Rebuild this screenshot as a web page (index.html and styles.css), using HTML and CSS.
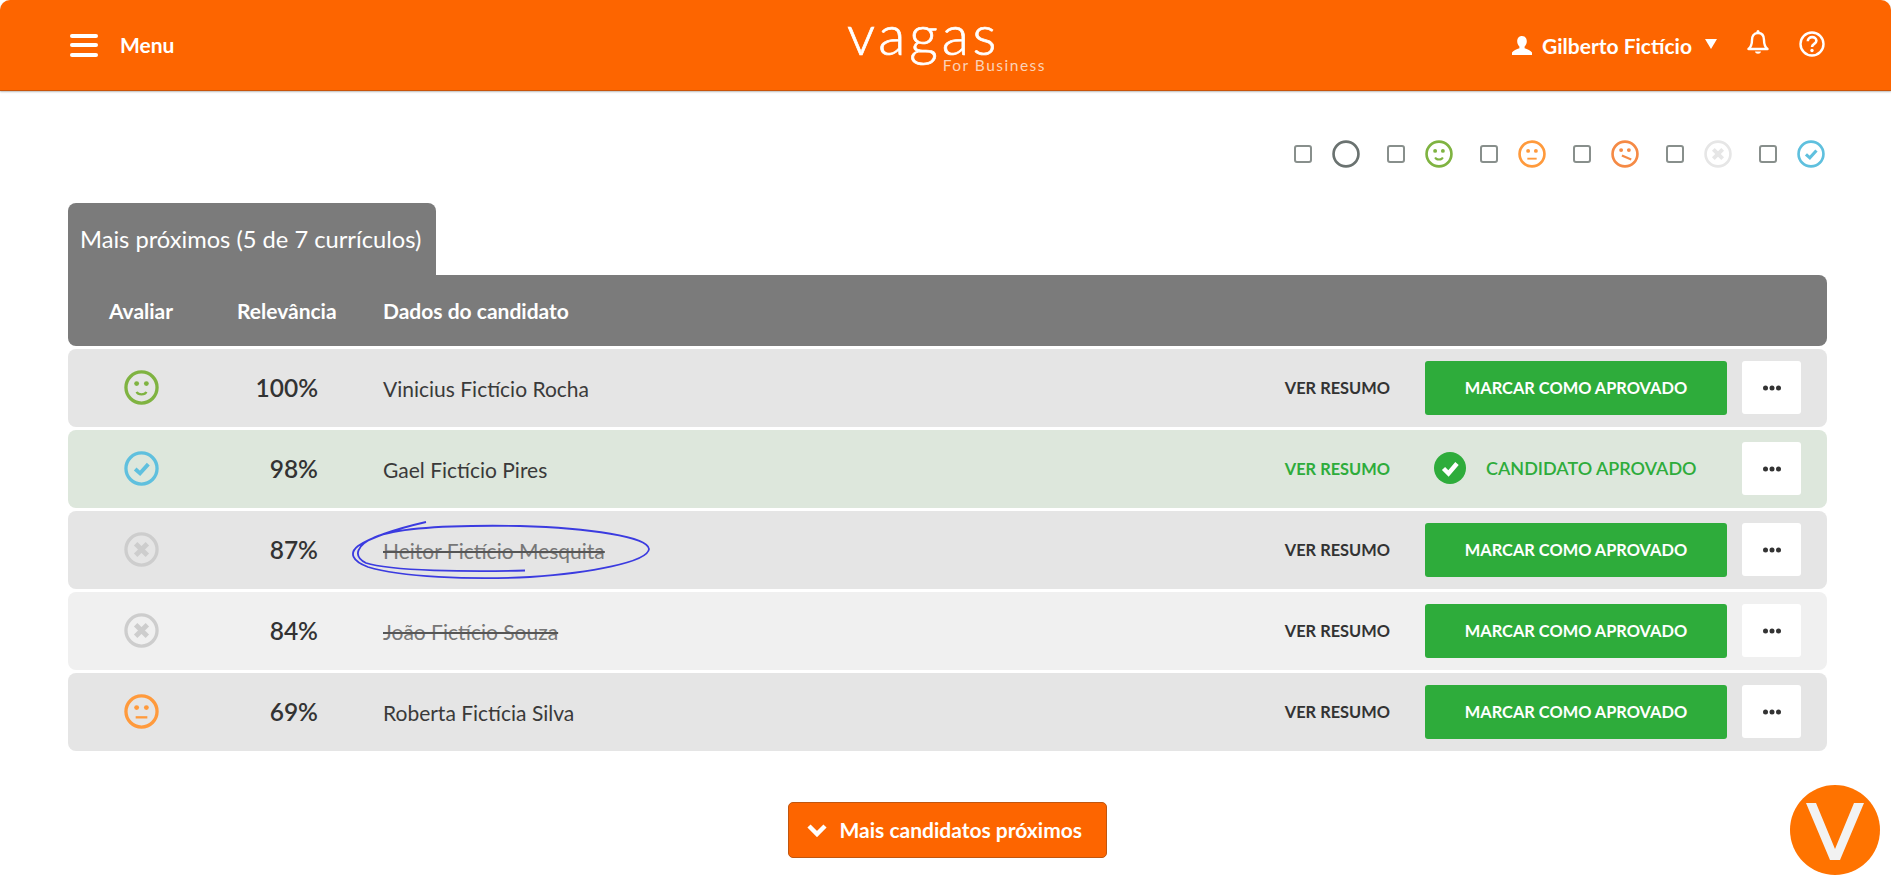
FILE: index.html
```html
<!DOCTYPE html>
<html lang="pt-BR">
<head>
    <meta charset="utf-8">
    <title>Mais próximos</title>
    <link rel="stylesheet" href="styles.css">
</head>
<body>
    <svg class="defs" width="0" height="0">
        <symbol id="ring" viewBox="0 0 36 36"><circle cx="18" cy="18" r="16" fill="none" stroke="currentColor" stroke-width="3.400"/></symbol>
        <symbol id="happy" viewBox="0 0 36 36">
            <circle cx="18" cy="18" r="16" fill="none" stroke="currentColor" stroke-width="3.400"/>
            <circle cx="13" cy="14" r="2.500" fill="currentColor"/><circle cx="23" cy="14" r="2.500" fill="currentColor"/>
            <path d="M13 22.500c1.500 3.400 8.500 3.400 10 0" fill="none" stroke="currentColor" stroke-width="2.400"/>
        </symbol>
        <symbol id="neutral" viewBox="0 0 36 36">
            <circle cx="18" cy="18" r="16" fill="none" stroke="currentColor" stroke-width="3.400"/>
            <circle cx="13" cy="14" r="2.500" fill="currentColor"/><circle cx="23" cy="14" r="2.500" fill="currentColor"/>
            <path d="M12 24h12" fill="none" stroke="currentColor" stroke-width="2.400"/>
        </symbol>
        <symbol id="sad" viewBox="0 0 36 36">
            <circle cx="18" cy="18" r="16" fill="none" stroke="currentColor" stroke-width="3.400"/>
            <circle cx="13" cy="13" r="2.500" fill="currentColor"/><circle cx="23" cy="13" r="2.500" fill="currentColor"/>
            <path d="M14 20l12 5" fill="none" stroke="currentColor" stroke-width="2.800"/>
        </symbol>
        <symbol id="cross" viewBox="0 0 36 36">
            <circle cx="18" cy="18" r="16" fill="none" stroke="currentColor" stroke-width="3.400"/>
            <path d="M12 12l12 12M24 12l-12 12" fill="none" stroke="currentColor" stroke-width="5"/>
        </symbol>
        <symbol id="tick" viewBox="0 0 36 36">
            <circle cx="18" cy="18" r="16" fill="none" stroke="currentColor" stroke-width="3.400"/>
            <path d="M11.500 18.500l5 4.500 8.500-9.500" fill="none" stroke="currentColor" stroke-width="4"/>
        </symbol>
        <symbol id="dots" viewBox="0 0 18 6"><circle cx="2.500" cy="3" r="2.500"/><circle cx="9" cy="3" r="2.500"/><circle cx="15.500" cy="3" r="2.500"/></symbol>
    </svg>

    <header class="topbar">
        <a href="#" class="menuLink">
            <span class="burger"><i></i><i></i><i></i></span>
            <span class="menuText">Menu</span>
        </a>
        <div class="logo">
            <span class="logoName">vagas</span>
            <span class="logoSub">For Business</span>
        </div>
        <div class="userArea">
            <svg class="userIcon" viewBox="0 0 20 19"><path fill="#fff" d="M10 0c3 0 4.800 2.200 4.800 5.300 0 2.300-1 4.200-2.200 5.300v1.600c2.600 1 6.400 2.200 7.400 4.300V19H0v-2.500c1-2.100 4.800-3.300 7.400-4.300v-1.600C6.200 9.500 5.200 7.600 5.200 5.300 5.200 2.200 7 0 10 0z"/></svg>
            <span class="userName">Gilberto Fictício</span>
            <span class="caret"></span>
            <svg class="bell" viewBox="0 0 22 26"><path fill="none" stroke="#fff" stroke-width="2.400" stroke-linejoin="round" d="M11 3c-4.500 0-6 3.500-6 7 0 4.500-1 7-3.500 9h19C18 17 17 14.500 17 10c0-3.500-1.500-7-6-7z"/><rect x="9.500" y="0" width="3" height="4" rx="1.500" fill="#fff"/><path fill="#fff" d="M8 21.500h6c-.4 3-5.600 3-6 0z"/></svg>
            <svg class="help" viewBox="0 0 26 26"><circle cx="13" cy="13" r="11.500" fill="none" stroke="#fff" stroke-width="2.400"/><path fill="none" stroke="#fff" stroke-width="2.600" d="M8.800 10.200c0-5.400 8.600-5.400 8.600-.4 0 3.200-4.400 3-4.400 6.200"/><circle cx="13" cy="19.500" r="1.700" fill="#fff"/></svg>
        </div>
    </header>

    <main class="content">
        <div class="legend">
            <label class="legendItem"><input type="checkbox"><svg class="legendIcon tone-dark"><use href="#ring"/></svg></label>
            <label class="legendItem"><input type="checkbox"><svg class="legendIcon tone-green"><use href="#happy"/></svg></label>
            <label class="legendItem"><input type="checkbox"><svg class="legendIcon tone-orange"><use href="#neutral"/></svg></label>
            <label class="legendItem"><input type="checkbox"><svg class="legendIcon tone-red"><use href="#sad"/></svg></label>
            <label class="legendItem"><input type="checkbox"><svg class="legendIcon tone-pale"><use href="#cross"/></svg></label>
            <label class="legendItem"><input type="checkbox"><svg class="legendIcon tone-blue"><use href="#tick"/></svg></label>
        </div>

        <div class="tab">Mais próximos (5 de 7 currículos)</div>
        <div class="tableHead">
            <span class="headEval">Avaliar</span>
            <span class="headRel">Relevância</span>
            <span>Dados do candidato</span>
        </div>

        <div class="rows">
            <div class="row">
                <span class="evalCell"><svg class="rowIcon tone-green"><use href="#happy"/></svg></span>
                <span class="relCell">100%</span>
                <span class="nameCell">Vinicius Fictício Rocha</span>
                <a href="#" class="resumeLink">VER RESUMO</a>
                <a href="#" class="approveBtn">MARCAR COMO APROVADO</a>
                <a href="#" class="moreBtn"><svg class="dots"><use href="#dots"/></svg></a>
            </div>
            <div class="row rowApproved">
                <span class="evalCell"><svg class="rowIcon tone-blue"><use href="#tick"/></svg></span>
                <span class="relCell">98%</span>
                <span class="nameCell">Gael Fictício Pires</span>
                <a href="#" class="resumeLink">VER RESUMO</a>
                <span class="approvedTag">
                    <svg class="approvedIcon" viewBox="0 0 32 32"><circle cx="16" cy="16" r="16" fill="#2eac3b"/><path d="M9.500 16.500l5 5 8.500-10" fill="none" stroke="#fff" stroke-width="4.500"/></svg>
                    CANDIDATO APROVADO
                </span>
                <a href="#" class="moreBtn"><svg class="dots"><use href="#dots"/></svg></a>
            </div>
            <div class="row">
                <span class="evalCell"><svg class="rowIcon tone-grey"><use href="#cross"/></svg></span>
                <span class="relCell">87%</span>
                <span class="nameCell struck">Heitor Fictício Mesquita</span>
                <a href="#" class="resumeLink">VER RESUMO</a>
                <a href="#" class="approveBtn">MARCAR COMO APROVADO</a>
                <a href="#" class="moreBtn"><svg class="dots"><use href="#dots"/></svg></a>
                <svg class="scribble" viewBox="350 519 302 62"><path fill="none" stroke="#3b3be0" stroke-width="1.800" d="M426 522C400 528 372 537 358 546C349 553 352 561 368 567C400 577 470 580 530 577C590 573 648 562 649 549C648 537 590 528 520 526C460 525 400 527 375 537C357 545 352 556 366 563C390 571 470 572 525 570.500"/></svg>
            </div>
            <div class="row rowLight">
                <span class="evalCell"><svg class="rowIcon tone-grey"><use href="#cross"/></svg></span>
                <span class="relCell">84%</span>
                <span class="nameCell struck">João Fictício Souza</span>
                <a href="#" class="resumeLink">VER RESUMO</a>
                <a href="#" class="approveBtn">MARCAR COMO APROVADO</a>
                <a href="#" class="moreBtn"><svg class="dots"><use href="#dots"/></svg></a>
            </div>
            <div class="row">
                <span class="evalCell"><svg class="rowIcon tone-orange"><use href="#neutral"/></svg></span>
                <span class="relCell">69%</span>
                <span class="nameCell">Roberta Fictícia Silva</span>
                <a href="#" class="resumeLink">VER RESUMO</a>
                <a href="#" class="approveBtn">MARCAR COMO APROVADO</a>
                <a href="#" class="moreBtn"><svg class="dots"><use href="#dots"/></svg></a>
            </div>
        </div>

        <div class="moreWrap">
            <a href="#" class="moreCandidates">
                <svg class="chevron" viewBox="0 0 20 14"><path fill="none" stroke="#fff" stroke-width="4.500" d="M2 3l8 8 8-8"/></svg>
                <span class="moreText">Mais candidatos próximos</span>
            </a>
        </div>
    </main>

    <div class="badge">
        <svg viewBox="0 0 90 90"><path fill="#f2f2f2" d="M16 18h10l19 46 19-46h10L50 75H40z"/></svg>
    </div>
</body>
</html>
```

FILE: styles.css
```css
* {
    box-sizing: border-box;
}

html,
body {
    margin: 0;
    padding: 0;
    height: 890px;
    overflow: hidden;
    background: #fff;
}

body {
    font-family: Lato, "Liberation Sans", sans-serif;
    color: #333;
}

a {
    text-decoration: none;
}

.defs {
    position: absolute;
}

/* topo */
.topbar {
    height: 91px;
    display: grid;
    grid-template-columns: 1fr auto 1fr;
    align-items: center;
    padding: 0 66px 0 70px;
    background: #fd6500;
    border-bottom: 1px solid #c9550c;
    border-radius: 10px 10px 0 0;
    box-shadow: 0 1px 2px #bbb;
    color: #fff;
}

.menuLink {
    display: flex;
    align-items: center;
    gap: 22px;
    color: #fff;
    font-size: 21px;
    font-weight: 700;
}

.menuText {
    margin-top: -2px;
}

.burger {
    width: 28px;
    display: flex;
    flex-direction: column;
    gap: 5.500px;
}

.burger i {
    height: 4px;
    background: #fff;
    border-radius: 2px;
}

.logo {
    width: 197px;
    height: 68px;
    display: flex;
    flex-direction: column;
    align-items: flex-end;
    line-height: 1;
}

.logoName {
    align-self: flex-start;
    height: 44px;
    margin: 1px 0 0 -2px;
    font-size: 56px;
    line-height: 44px;
    font-weight: 300;
    letter-spacing: 3.800px;
    -webkit-text-stroke: 0.7px #fff;
}

.logoSub {
    margin-top: 2px;
    font-size: 15.500px;
    letter-spacing: 1.500px;
    color: #fbd3b8;
}

.userArea {
    justify-self: end;
    display: flex;
    align-items: center;
}

.userIcon {
    width: 20px;
    height: 19px;
    margin-right: 10px;
}

.userName {
    font-size: 21px;
    font-weight: 700;
}

.caret {
    width: 0;
    height: 0;
    margin: -3px 0 0 13px;
    border-left: 6px solid transparent;
    border-right: 6px solid transparent;
    border-top: 10px solid #fff;
}

.bell {
    width: 22px;
    height: 26px;
    margin: -5px 0 0 30px;
}

.help {
    width: 26px;
    height: 26px;
    margin: -2px 0 0 30px;
}

/* conteudo */
.content {
    width: 1759px;
    margin-left: 68px;
}

.legend {
    height: 112px;
    padding: 14px 2px 0 0;
    display: flex;
    justify-content: flex-end;
    align-items: center;
    gap: 27px;
}

.legendItem {
    display: flex;
    align-items: center;
    gap: 20px;
}

.legendItem input {
    appearance: none;
    width: 18px;
    height: 18px;
    margin: 0;
    border: 2px solid #888f8c;
    border-radius: 3px;
    background: #fff;
}

.legendIcon {
    width: 28px;
    height: 28px;
}

.rowIcon {
    width: 35px;
    height: 35px;
}

.tone-dark { color: #6a7270; }
.tone-green { color: #7fb341; }
.tone-orange { color: #ff9a3c; }
.tone-red { color: #f58a45; }
.tone-pale { color: #e6e6e6; }
.tone-grey { color: #cdcdcd; }
.tone-blue { color: #5fc0de; }

.tab {
    width: 368px;
    height: 72px;
    padding: 20px 0 0 12px;
    background: #7b7b7b;
    border-radius: 8px 8px 0 0;
    color: #fff;
    font-size: 23.700px;
    line-height: 32px;
}

.tableHead {
    height: 71px;
    display: flex;
    align-items: center;
    background: #7b7b7b;
    border-radius: 0 8px 8px 8px;
    color: #fff;
    font-size: 21px;
    font-weight: 700;
}

.headEval {
    width: 146px;
    text-align: center;
}

.headRel {
    width: 169px;
    padding-left: 23px;
}

.rows {
    margin-top: 3px;
    display: flex;
    flex-direction: column;
    gap: 3px;
}

.row {
    position: relative;
    height: 78px;
    display: flex;
    align-items: center;
    padding-right: 26px;
    background: #e5e5e5;
    border-radius: 8px;
}

.rowApproved {
    background: #dde7dc;
}

.rowLight {
    background: #f0f0f0;
}

.evalCell {
    width: 146px;
    display: flex;
    justify-content: center;
    margin-top: -2px;
}

.relCell {
    width: 169px;
    padding-right: 65px;
    text-align: right;
    font-size: 24.500px;
    font-weight: 600;
    margin-top: -1px;
}

.nameCell {
    flex: 1;
    font-size: 21px;
    color: #3a3a3a;
}

.struck {
    color: #777;
    text-decoration: line-through;
    text-decoration-color: #555;
}

.resumeLink {
    margin: -2px 35px 0 0;
    font-size: 16.400px;
    font-weight: 700;
    color: #333;
}

.rowApproved .resumeLink {
    color: #2eac3b;
}

.approveBtn {
    width: 302px;
    height: 54px;
    display: flex;
    align-items: center;
    justify-content: center;
    margin-right: 15px;
    padding-bottom: 1px;
    background: #2eac3b;
    border-radius: 3px;
    color: #fff;
    font-size: 16.400px;
    font-weight: 700;
}

.approvedTag {
    width: 302px;
    display: flex;
    align-items: center;
    gap: 20px;
    margin: -2px 15px 0 0;
    padding-left: 9px;
    color: #2eac3b;
    font-size: 18px;
    font-weight: 600;
}

.approvedIcon {
    width: 32px;
    height: 32px;
}

.moreBtn {
    width: 59px;
    height: 53px;
    margin-top: -1px;
    display: flex;
    align-items: center;
    justify-content: center;
    background: #fff;
    border-radius: 3px;
}

.dots {
    width: 18px;
    height: 6px;
    fill: #333;
}

.scribble {
    position: absolute;
    left: 282px;
    top: 8px;
    width: 302px;
    height: 62px;
}

.moreWrap {
    margin-top: 51px;
    display: flex;
    justify-content: center;
    padding-right: 1px;
}

.moreCandidates {
    width: 319px;
    height: 56px;
    display: flex;
    align-items: center;
    gap: 13px;
    padding-left: 18px;
    background: #fd6500;
    border: 1px solid #c0560f;
    border-radius: 5px;
    color: #fff;
    font-size: 21px;
    font-weight: 700;
}

.moreText {
    margin-top: -2px;
}

.chevron {
    width: 20px;
    height: 14px;
}

.badge {
    position: fixed;
    right: 11px;
    bottom: 15px;
    width: 90px;
    height: 90px;
    border-radius: 50%;
    background: #ff7300;
}

.badge svg {
    display: block;
    width: 90px;
    height: 90px;
}
```
